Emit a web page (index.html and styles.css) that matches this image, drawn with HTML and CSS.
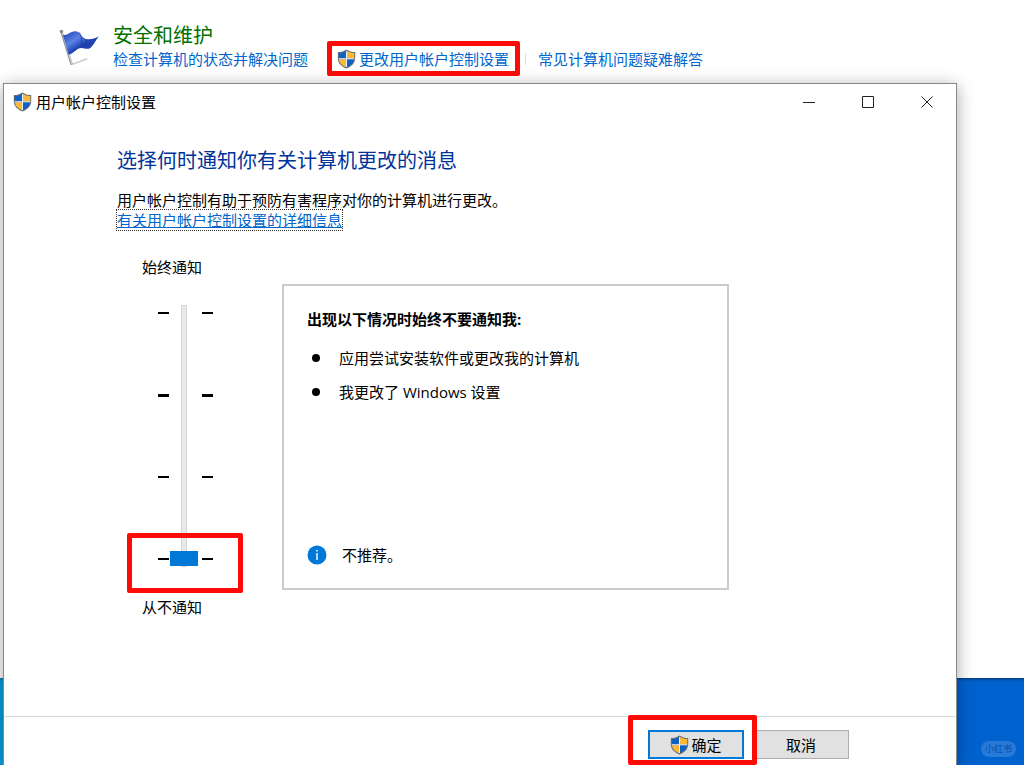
FILE: index.html
```html
<!DOCTYPE html>
<html lang="zh-CN">
<head>
    <meta charset="UTF-8">
    <meta name="viewport" content="width=device-width, initial-scale=1.0">
    <title>用户帐户控制设置</title>
    <link rel="stylesheet" href="styles.css">
</head>
<body>
<!-- shield icon, reused by the link, the title bar and the OK button -->
<svg class="defs" width="0" height="0" aria-hidden="true">
    <symbol id="shield" viewBox="0 0 19 20">
        <path d="M9.5 .5C7 2.200 4 3 .8 3.100V9c0 5 3.500 8.500 8.700 10.500C14.700 17.500 18.200 14 18.200 9V3.100C15 3 12 2.200 9.500.5z" fill="#6c7176"/>
        <path d="M9 2C6.800 3.300 4.400 4 1.800 4.100V9.300H9z" fill="#0f62c4"/>
        <path d="M10 2c2.200 1.300 4.600 2 7.200 2.100V9.300H10z" fill="#fdb933"/>
        <path d="M1.900 10.300H9v8C5 16.600 2.300 14 1.900 10.300z" fill="#fdb933"/>
        <path d="M17.100 10.300H10v8c4-1.700 6.700-4.300 7.100-8z" fill="#0f62c4"/>
        <path d="M9 2.300h1V18H9zM1.800 9.300h15.400v1H1.800z" fill="#e8f1f8"/>
    </symbol>
</svg>

<div class="desktop">
    <div class="panel-bg"></div>

    <header class="panel">
        <svg class="flag" viewBox="0 0 42 40" aria-hidden="true">
            <defs>
                <linearGradient id="cloth" x1="0" y1="0" x2="1" y2="1">
                    <stop offset="0" stop-color="#1b3fae"/>
                    <stop offset=".35" stop-color="#5c82e4"/>
                    <stop offset=".55" stop-color="#2346b8"/>
                    <stop offset="1" stop-color="#1a2f96"/>
                </linearGradient>
            </defs>
            <path d="M13 37l16-6" stroke="#c9c9c9" stroke-width="1.500"/>
            <path d="M2.500 3L13 37" stroke="#8d9095" stroke-width="2.500"/>
            <path d="M3 3L13.500 37" stroke="#e3e3e3" stroke-width="1"/>
            <circle cx="2.500" cy="3" r="1.800" fill="#85878c"/>
            <path d="M4 7c6 0 8-5 14-4 5 1 5 7 11 8 4 .5 8-1 12-3-3 3-5 9-9 12-3 2-6 0-9 0-5 0-7 5-13 7z" fill="url(#cloth)"/>
            <path d="M21 4c2 5 3 10 2 15M29 11l-3 8" stroke="#1a338f" stroke-width="1" fill="none" opacity=".6"/>
        </svg>
        <div class="panel-text">
            <h1>安全和维护</h1>
            <nav class="links">
                <a href="#">检查计算机的状态并解决问题</a>
                <a href="#" class="shield-link marked">
                    <svg class="shield"><use href="#shield"/></svg>更改用户帐户控制设置
                </a>
                <span class="divider"></span>
                <a href="#">常见计算机问题疑难解答</a>
            </nav>
        </div>
    </header>

    <div class="watermark">小红书</div>

    <section class="dialog">
        <div class="titlebar">
            <svg class="shield"><use href="#shield"/></svg>
            <span class="title">用户帐户控制设置</span>
            <button class="win-btn" aria-label="最小化">
                <svg viewBox="0 0 12 12"><path d="M0 6.500h12"/></svg>
            </button>
            <button class="win-btn" aria-label="最大化">
                <svg viewBox="0 0 12 12"><path d="M.5.5h11v11H.5z"/></svg>
            </button>
            <button class="win-btn" aria-label="关闭">
                <svg viewBox="0 0 12 12"><path d="M.5.5l11 11M11.500.5l-11 11"/></svg>
            </button>
        </div>

        <main class="content">
            <h2>选择何时通知你有关计算机更改的消息</h2>
            <p>用户帐户控制有助于预防有害程序对你的计算机进行更改。</p>
            <a href="#" class="details">有关用户帐户控制设置的详细信息</a>

            <div class="settings">
                <div class="level">
                    <label for="level">始终通知</label>
                    <div class="slider">
                        <div class="ticks"><i></i><i class="thick"></i><i></i><i></i></div>
                        <input type="range" id="level" min="0" max="3" value="0">
                        <div class="ticks right"><i></i><i class="thick"></i><i></i><i></i></div>
                    </div>
                    <label for="level">从不通知</label>
                </div>

                <div class="info">
                    <h3>出现以下情况时始终不要通知我:</h3>
                    <ul>
                        <li>应用尝试安装软件或更改我的计算机</li>
                        <li>我更改了 Windows 设置</li>
                    </ul>
                    <div class="advice">
                        <svg viewBox="0 0 20 20" aria-hidden="true">
                            <circle cx="10" cy="10" r="9.500" fill="#0078d7"/>
                            <path d="M9.300 8h1.400v7H9.300zM9.200 5h1.600v1.600H9.200z" fill="#fff"/>
                        </svg>
                        不推荐。
                    </div>
                </div>
            </div>
        </main>

        <footer class="actions">
            <div class="marked">
                <button class="btn primary"><svg class="shield"><use href="#shield"/></svg>确定</button>
            </div>
            <button class="btn">取消</button>
        </footer>
    </section>
</div>
</body>
</html>
```
FILE: styles.css
```css
* {
    box-sizing: border-box;
}

body {
    margin: 0;
    font-family: "Open Sans", "Noto Sans CJK SC", sans-serif;
    font-size: 15px;
    line-height: 20px;
    color: #000;
}

h1, h2, h3, p, ul {
    margin: 0;
    padding: 0;
}

a {
    color: #0066cc;
    text-decoration: none;
}

button {
    font: inherit;
    color: inherit;
}

.defs {
    position: absolute;
}

.desktop {
    position: relative;
    display: flex;
    flex-direction: column;
    min-height: 100vh;
    overflow: hidden;
    background: linear-gradient(90deg, #0a9fe0, #0062cf 30%);
}

/* white window behind the dialog */
.panel-bg {
    position: absolute;
    inset: 0 0 87px;
    background: #fff;
    box-shadow: 0 1px 3px rgba(0, 0, 0, 0.5);
}

.panel {
    position: relative;
    display: flex;
    gap: 13px;
    height: 83px;
    padding: 23px 0 0 59px;
}

.flag {
    width: 41px;
    height: 40px;
    margin-top: 5px;
    fill: none;
}

.panel h1 {
    font-size: 20px;
    font-weight: normal;
    line-height: 26px;
    color: #007000;
}

.links {
    display: flex;
    align-items: center;
}

.shield {
    flex: none;
    width: 19px;
    height: 20px;
}

.shield-link {
    display: flex;
    align-items: center;
    gap: 3px;
    margin-left: 29px;
}

.divider {
    width: 1px;
    height: 12px;
    margin: 0 12px 0 16px;
    background: #ddd;
}

/* red highlight frames */
.marked {
    position: relative;
}

.marked::after,
.slider::after {
    content: "";
    position: absolute;
    border: 5px solid #fe0b08;
    border-radius: 2px;
    pointer-events: none;
}

.shield-link::after {
    inset: -8px -11px -7px -10px;
}

.dialog {
    position: relative;
    flex: 1;
    display: flex;
    flex-direction: column;
    margin: 0 67px 0 3px;
    background: #fff;
    border: 1px solid #888;
    border-bottom: none;
    box-shadow: 0 3px 16px rgba(0, 0, 0, 0.35);
}

.titlebar {
    display: flex;
    align-items: center;
    height: 36px;
    padding-left: 9px;
}

.title {
    flex: 1;
    padding-left: 4px;
}

.win-btn {
    display: flex;
    align-items: center;
    justify-content: center;
    width: 59px;
    height: 36px;
    padding: 0;
    background: none;
    border: none;
}

.win-btn svg {
    width: 12px;
    height: 12px;
    fill: none;
    stroke: #222;
}

.content {
    flex: 1;
    padding: 27px 113px 0;
}

.content h2 {
    margin-bottom: 15px;
    font-size: 20px;
    font-weight: normal;
    line-height: 28px;
    color: #003399;
}

.details {
    display: inline-block;
    text-decoration: underline;
    outline: 1px dotted #333;
}

.settings {
    display: flex;
    align-items: flex-start;
    margin-top: 27px;
}

.level {
    flex: none;
    width: 165px;
    padding-left: 25px;
}

.level label {
    display: block;
}

.slider {
    position: relative;
    display: flex;
    gap: 1px;
    width: 55px;
    height: 262px;
    margin: 28px 0 30px 16px;
}

.slider::after {
    inset: auto -30px -26px -31px;
    height: 50px;
}

.ticks {
    display: flex;
    flex-direction: column;
    justify-content: space-between;
    width: 11px;
    padding: 7px 0;
}

.ticks.right {
    margin-left: auto;
}

.ticks i {
    height: 2px;
    background: #000;
}

.ticks .thick {
    height: 3px;
}

.slider input {
    appearance: none;
    writing-mode: vertical-lr;
    direction: rtl;
    width: 28px;
    height: 262px;
    margin: 0;
    background: none;
}

.slider input::-webkit-slider-runnable-track {
    width: 6px;
    background: #e7eaea;
    border: 1px solid #d6d6d6;
}

.slider input::-webkit-slider-thumb {
    appearance: none;
    width: 28px;
    height: 15px;
    margin-left: -12px;
    background: #0078d7;
}

.info {
    flex: 1;
    display: flex;
    flex-direction: column;
    max-width: 447px;
    min-height: 306px;
    margin-top: 27px;
    padding: 23px;
    border: 2px solid #ccc;
}

.info h3 {
    font-size: 15px;
}

.info ul {
    margin-top: 12px;
    list-style: none;
}

.info li {
    display: flex;
    align-items: center;
    gap: 19px;
    height: 34px;
    padding-left: 5px;
}

.info li::before {
    content: "";
    width: 8px;
    height: 8px;
    border-radius: 50%;
    background: #000;
}

.advice {
    display: flex;
    align-items: center;
    gap: 15px;
    margin-top: auto;
}

.advice svg {
    width: 20px;
    height: 20px;
}

.actions {
    display: flex;
    justify-content: flex-end;
    gap: 9px;
    padding: 13px 107px 6px 0;
    border-top: 1px solid #d9d9d9;
}

.actions .marked {
    z-index: 1;
}

.actions .marked::after {
    inset: -15px -13px -6px -20px;
}

.btn {
    display: flex;
    align-items: center;
    justify-content: center;
    gap: 2px;
    width: 96px;
    height: 29px;
    padding: 0;
    background: #e1e1e1;
    border: 1px solid #adadad;
}

.btn.primary {
    border: 2px solid #0078d7;
}

.watermark {
    position: absolute;
    right: 8px;
    bottom: 8px;
    padding: 0 4px;
    border-radius: 8px;
    background: rgba(255, 255, 255, 0.15);
    font-size: 9px;
    line-height: 16px;
    color: #0a4fae;
}
```
